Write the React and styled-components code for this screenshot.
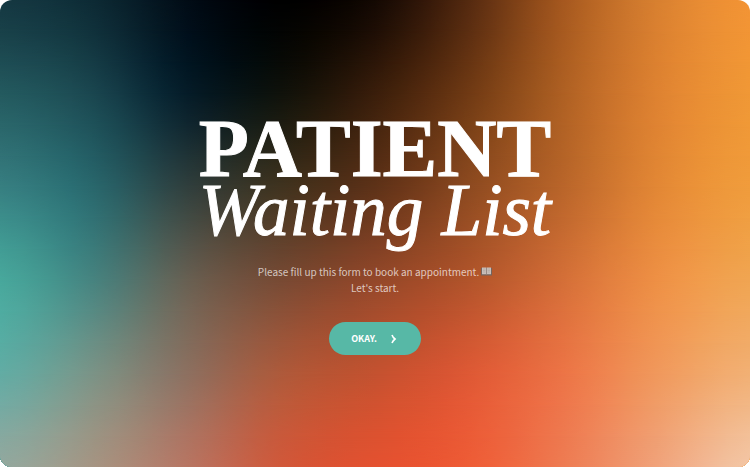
import React from "react";
import styled, { createGlobalStyle, css } from "styled-components";

const GlobalStyle = createGlobalStyle`
  * { box-sizing: border-box; }
  body { margin: 0; background: #fff; }
`;

const sans = css`font-family: "Noto Sans CJK SC", "Noto Sans", sans-serif;`;

/* Colour mesh: each row runs left to right, rows blend into each other top to bottom. */
const mesh = [
  ["#153842", "#0d2a34", "#020c16", "#000000", "#140903", "#552a10", "#a5581f", "#d88030", "#f39435"],
  ["#245a5f", "#1a464f", "#051c28", "#10120b", "#3a1e0b", "#703a14", "#ae6023", "#de8231", "#f09836"],
  ["#377f81", "#29676c", "#303f3d", "#40331f", "#5e3218", "#8d4a20", "#b9652a", "#e28735", "#f09c3c"],
  ["#48a89c", "#47837f", "#686052", "#784a34", "#94482a", "#b2542b", "#d46f38", "#ee9045", "#f0a552"],
  ["#62aca4", "#7b9386", "#8d7060", "#ae5a3b", "#c45230", "#de5935", "#ec7446", "#f0985c", "#f2b074"],
  ["#94a89e", "#a69482", "#b87562", "#d1583a", "#e45130", "#ee5c36", "#ee7b52", "#f0a27a", "#f3c6a6"],
];

const channels = (hex) => [1, 3, 5].map((i) => parseInt(hex.slice(i, i + 2), 16));

/* Catmull-Rom interpolation over a list of colours, each an array of channels. */
function smooth(list, steps) {
  const at = (i) => list[Math.max(0, Math.min(list.length - 1, i))];
  const count = (list.length - 1) * steps;
  return Array.from({ length: count + 1 }, (_, n) => {
    const i = Math.floor(n / steps);
    const t = (n % steps) / steps;
    return at(i).map((p1, c) => {
      const p0 = at(i - 1)[c];
      const p2 = at(i + 1)[c];
      const p3 = at(i + 2)[c];
      return (
        p1 +
        0.5 * t * (p2 - p0 + t * (2 * p0 - 5 * p1 + 4 * p2 - p3 + t * (3 * (p1 - p2) + p3 - p0)))
      );
    });
  });
}

const toRgb = (c) => `rgb(${c.map((v) => Math.max(0, Math.min(255, Math.round(v)))).join(" ")})`;

const wideRows = mesh.map((row) => smooth(row.map(channels), 4).flat());
const meshRows = smooth(wideRows, 3).map((flat) =>
  Array.from({ length: flat.length / 3 }, (_, i) => toRgb(flat.slice(i * 3, i * 3 + 3)))
);
const rowStep = 100 / (meshRows.length - 1);

const Screen = styled.main`
  position: relative;
  isolation: isolate;
  min-height: 100vh;
  display: flex;
  flex-direction: column;
  align-items: center;
  justify-content: center;
  padding: 30px 24px 24px;
  border-radius: 12px;
  overflow: hidden;
  text-align: center;
  color: #fff;
`;

const MeshRow = styled.div`
  position: absolute;
  inset: 0;
  z-index: -1;
  background: linear-gradient(to right, ${(p) => p.$colors.join(", ")});
  ${(p) =>
    p.$index > 0 &&
    css`
      mask-image: linear-gradient(
        to bottom,
        transparent ${(p.$index - 1) * rowStep}%,
        #000 ${p.$index * rowStep}%
      );
    `}
`;

const Title = styled.h1`
  margin: 0;
  font-family: "Liberation Serif", serif;
  font-weight: 700;
  font-size: 82px;
  line-height: 62px;
  text-align: left;
  -webkit-text-stroke: 1px #fff;
`;

const TitleAccent = styled.em`
  display: block;
  font-size: 73px;
  font-weight: 400;
`;

const Intro = styled.p`
  ${sans}
  margin: 22px 0 26px;
  font-size: 10px;
  line-height: 16px;
  color: rgba(255, 255, 255, 0.7);
`;

const BookIcon = styled.svg`
  width: 11px;
  height: 9px;
  margin-left: 2px;
`;

const StartButton = styled.button`
  ${sans}
  display: inline-flex;
  align-items: center;
  gap: 12px;
  height: 33px;
  padding: 0 22px;
  border: 0;
  border-radius: 17px;
  background: #57b8a6;
  color: #fff;
  font-size: 9px;
  font-weight: 700;
  cursor: pointer;
`;

export default function App() {
  return (
    <>
      <GlobalStyle />
      <Screen>
        {meshRows.map((colors, i) => (
          <MeshRow key={i} $index={i} $colors={colors} />
        ))}
        <Title>
          PATIENT
          <TitleAccent>Waiting List</TitleAccent>
        </Title>
        <Intro>
          Please fill up this form to book an appointment.
          <BookIcon viewBox="0 0 11 9" role="img" aria-label="Open book">
            <path d="M0 1h11v7.5H0z" fill="#73645f" />
            <path d="M1 .5h4.2v6.7H1zM5.8.5H10v6.7H5.8z" fill="#c9bfba" />
            <path d="M2 2h2.4M2 3.5h2.4M2 5h2.4M6.6 2H9M6.6 3.5H9M6.6 5H9" stroke="#aaa09b" strokeWidth=".5" />
            <path d="M5.5.5v7.5" stroke="#9a8c86" strokeWidth=".6" />
          </BookIcon>
          <br />
          Let&#39;s start.
        </Intro>
        <StartButton type="button">
          OKAY.
          <svg width="10" height="10" viewBox="0 0 10 10" fill="none" aria-hidden="true">
            <path d="M3 1c.6 1.7 1.6 2.9 3 4-1.4 1.1-2.4 2.300-3 4" stroke="#fff" strokeWidth="1.600" />
          </svg>
        </StartButton>
      </Screen>
    </>
  );
}
